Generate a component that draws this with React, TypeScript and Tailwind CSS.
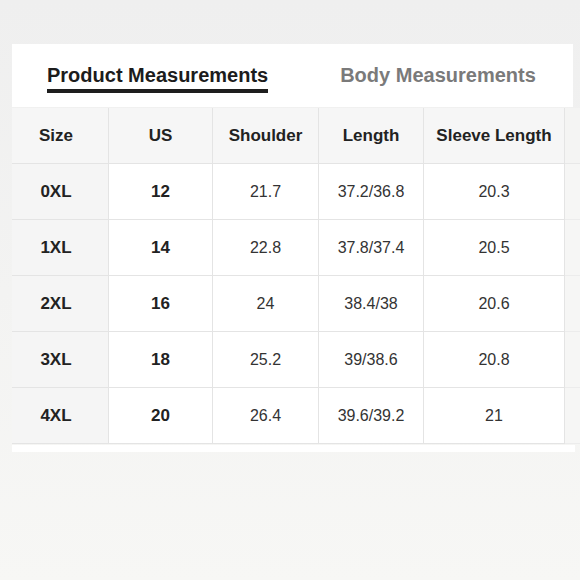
import React from "react";

const headers = ["Size", "US", "Shoulder", "Length", "Sleeve Length"];

const rows = [
  ["0XL", "12", "21.7", "37.2/36.8", "20.3"],
  ["1XL", "14", "22.8", "37.8/37.4", "20.5"],
  ["2XL", "16", "24", "38.4/38", "20.6"],
  ["3XL", "18", "25.2", "39/38.6", "20.8"],
  ["4XL", "20", "26.4", "39.6/39.2", "21"],
];

const App: React.FC = () => {
  return (
    <div
      className="w-[580px] h-[580px] overflow-hidden bg-gradient-to-b from-[#efefef] to-[#f7f7f5] pt-[44px] pl-[12px]"
      style={{ fontFamily: '"Liberation Sans", Arial, sans-serif' }}
    >
      {/* tabs */}
      <div className="w-[561px] h-[63px] bg-white flex pt-[19px] pl-[35px]">
        <div className="flex flex-col">
          <span className="text-[20px] leading-[24px] font-bold text-[#1c1c1c]">
            Product Measurements
          </span>
          <div className="mt-[2px] h-[4px] bg-[#1e1e1e]" />
        </div>
        <span className="ml-[72px] text-[20px] leading-[24px] font-bold text-[#7a7a7a]">
          Body Measurements
        </span>
      </div>

      {/* table */}
      <div className="mt-[1px] grid grid-cols-[97px_104px_106px_105px_141px_40px] w-[593px]">
        {headers.map((h, i) => (
          <div
            key={h}
            className={
              i === 0
                ? "h-[56px] flex items-center justify-center pr-[8px] bg-[#f6f6f6] border-r border-b border-[#e4e4e4] text-[17px] font-bold text-[#222]"
                : "h-[56px] flex items-center justify-center bg-[#f6f6f6] border-r border-b border-[#e4e4e4] text-[17px] font-bold text-[#222]"
            }
          >
            {h}
          </div>
        ))}
        <div className="h-[56px] bg-[#f4f4f3] border-b border-[#e8e8e8]" />
        {rows.map((r) => (
          <React.Fragment key={r[0]}>
            {r.map((v, i) => (
              <div
                key={i}
                className={
                  i === 0
                    ? "h-[56px] flex items-center justify-center pr-[8px] bg-[#f5f5f5] border-r border-b border-[#e4e4e4] text-[17px] font-bold text-[#222]"
                    : i === 1
                    ? "h-[56px] flex items-center justify-center bg-white border-r border-b border-[#e4e4e4] text-[17px] font-bold text-[#222]"
                    : "h-[56px] flex items-center justify-center bg-white border-r border-b border-[#e4e4e4] text-[16px] text-[#333]"
                }
              >
                {v}
              </div>
            ))}
            <div className="h-[56px] bg-[#f6f6f5] border-b border-[#ececec]" />
          </React.Fragment>
        ))}
      </div>
      <div className="mt-[1px] w-[563px] h-[7px] bg-white" />
    </div>
  );
};

export default App;
